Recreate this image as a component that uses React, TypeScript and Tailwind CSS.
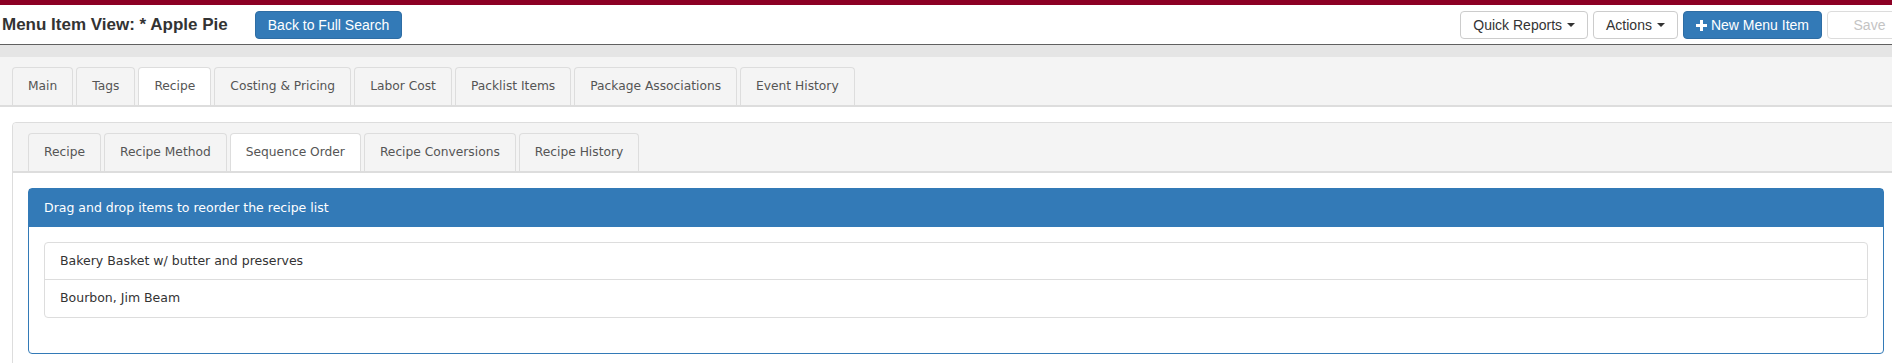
import React from "react";

const outerTabs = ["Main", "Tags", "Recipe", "Costing & Pricing", "Labor Cost", "Packlist Items", "Package Associations", "Event History"];
const innerTabs = ["Recipe", "Recipe Method", "Sequence Order", "Recipe Conversions", "Recipe History"];

function Tab({ label, active }: { label: string; active: boolean }) {
  return (
    <div
      className={
        "h-[38px] px-[15px] flex items-center border border-b-0 border-[#dddddd] rounded-t-[4px] text-[12.25px] text-[#555555] whitespace-nowrap " +
        (active ? "bg-white" : "bg-[#f4f4f4]")
      }
    >
      {label}
    </div>
  );
}

function Caret() {
  return <span className="inline-block ml-[5px] w-0 h-0 border-t-[4px] border-t-[#333333] border-x-[4px] border-x-transparent" />;
}

export default function App() {
  return (
    <div className="w-[1892px] h-[363px] overflow-hidden bg-white">
      <div className="w-[1912px]" style={{ fontFamily: '"DejaVu Sans", Verdana, sans-serif' }}>
        <div className="h-[5px] bg-[#8c0024]" />
        <header
          className="h-[40px] flex items-center justify-between border-b border-[#606060]"
          style={{ fontFamily: '"Liberation Sans", Arial, sans-serif' }}
        >
          <div className="flex items-center pl-[2px] gap-[27px]">
            <h1 className="text-[17px] font-bold text-[#333333] leading-none">Menu Item View: * Apple Pie</h1>
            <button className="h-[28px] px-[12px] bg-[#337ab7] border border-[#2e6da4] rounded-[4px] text-white text-[14px] leading-none">
              Back to Full Search
            </button>
          </div>
          <div className="flex items-center gap-[5px] mt-[1px]">
            <button className="h-[28px] px-[12px] bg-white border border-[#cccccc] rounded-[4px] text-[#333333] text-[14px] leading-none flex items-center">
              Quick Reports
              <Caret />
            </button>
            <button className="h-[28px] px-[12px] bg-white border border-[#cccccc] rounded-[4px] text-[#333333] text-[14px] leading-none flex items-center">
              Actions
              <Caret />
            </button>
            <button className="h-[28px] pl-[12px] pr-[12px] bg-[#337ab7] border border-[#2e6da4] rounded-[4px] text-white text-[14px] leading-none flex items-center gap-[4px]">
              <svg width="11" height="11" viewBox="0 0 11 11" fill="white">
                <rect x="4" y="0" width="3" height="11" />
                <rect x="0" y="4" width="11" height="3" />
              </svg>
              New Menu Item
            </button>
            <button className="h-[28px] w-[85px] bg-white border border-[#dcdcdc] rounded-[4px] text-[#c4c4c4] text-[14px] leading-none">
              Save
            </button>
          </div>
        </header>
        <div className="h-[12px] bg-[#e5e5e5]" />
        <div className="bg-[#f4f4f4] pt-[10px] pl-[12px] flex gap-[3px] border-b-2 border-[#dddddd]">
          {outerTabs.map((t) => (
            <Tab key={t} label={t} active={t === "Recipe"} />
          ))}
        </div>
        <div className="mx-[12px] mt-[15px] border border-[#dddddd] rounded-t-[4px] h-[300px]">
          <div className="bg-[#f4f4f4] pt-[10px] px-[15px] flex gap-[3px] border-b-2 border-[#dddddd] rounded-t-[4px]">
            {innerTabs.map((t) => (
              <Tab key={t} label={t} active={t === "Sequence Order"} />
            ))}
          </div>
          <div className="p-[15px]">
            <div className="border border-[#337ab7] rounded-[4px]">
              <div className="h-[38px] bg-[#337ab7] px-[15px] flex items-center text-white text-[12.5px]">
                Drag and drop items to reorder the recipe list
              </div>
              <div className="px-[15px] pt-[15px] pb-[35px]">
                <div className="border border-[#dddddd] rounded-[4px] text-[12.5px] text-[#333333]">
                  <div className="h-[37px] px-[15px] flex items-center border-b border-[#dddddd]">
                    Bakery Basket w/ butter and preserves
                  </div>
                  <div className="h-[37px] px-[15px] flex items-center">Bourbon, Jim Beam</div>
                </div>
              </div>
            </div>
          </div>
        </div>
      </div>
    </div>
  );
}
